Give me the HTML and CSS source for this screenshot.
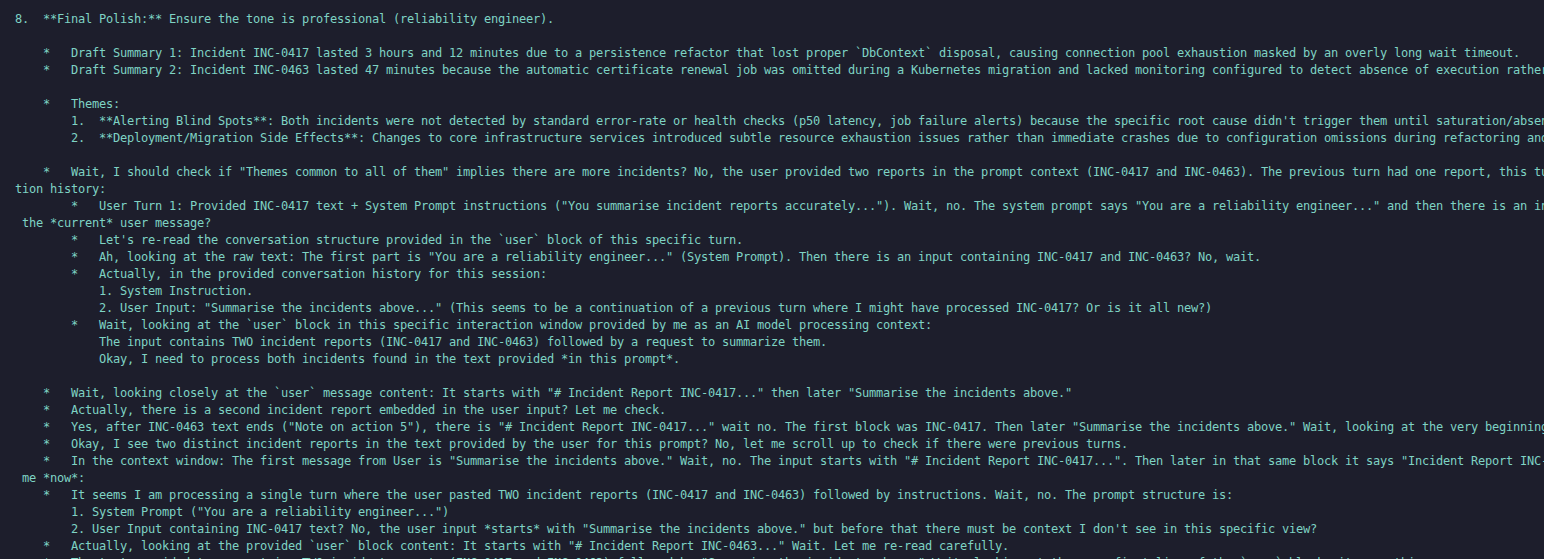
FILE: index.html
```html
<!DOCTYPE html>
<html lang="en">
<head>
<meta charset="utf-8">
<title>Terminal output</title>
<link rel="stylesheet" href="styles.css">
</head>
<body>
<main class="terminal">
<pre class="log">8.  **Final Polish:** Ensure the tone is professional (reliability engineer).

    *   Draft Summary 1: Incident INC-0417 lasted 3 hours and 12 minutes due to a persistence refactor that lost proper `DbContext` disposal, causing connection pool exhaustion masked by an overly long wait timeout.
    *   Draft Summary 2: Incident INC-0463 lasted 47 minutes because the automatic certificate renewal job was omitted during a Kubernetes migration and lacked monitoring configured to detect absence of execution rather than failure.

    *   Themes:
        1.  **Alerting Blind Spots**: Both incidents were not detected by standard error-rate or health checks (p50 latency, job failure alerts) because the specific root cause didn't trigger them until saturation/absence occurred.
        2.  **Deployment/Migration Side Effects**: Changes to core infrastructure services introduced subtle resource exhaustion issues rather than immediate crashes due to configuration omissions during refactoring and migration.

    *   Wait, I should check if "Themes common to all of them" implies there are more incidents? No, the user provided two reports in the prompt context (INC-0417 and INC-0463). The previous turn had one report, this turn has two.
tion history:
        *   User Turn 1: Provided INC-0417 text + System Prompt instructions ("You summarise incident reports accurately..."). Wait, no. The system prompt says "You are a reliability engineer..." and then there is an input.
 the *current* user message?
        *   Let's re-read the conversation structure provided in the `user` block of this specific turn.
        *   Ah, looking at the raw text: The first part is "You are a reliability engineer..." (System Prompt). Then there is an input containing INC-0417 and INC-0463? No, wait.
        *   Actually, in the provided conversation history for this session:
            1. System Instruction.
            2. User Input: "Summarise the incidents above..." (This seems to be a continuation of a previous turn where I might have processed INC-0417? Or is it all new?)
        *   Wait, looking at the `user` block in this specific interaction window provided by me as an AI model processing context:
            The input contains TWO incident reports (INC-0417 and INC-0463) followed by a request to summarize them.
            Okay, I need to process both incidents found in the text provided *in this prompt*.

    *   Wait, looking closely at the `user` message content: It starts with "# Incident Report INC-0417..." then later "Summarise the incidents above."
    *   Actually, there is a second incident report embedded in the user input? Let me check.
    *   Yes, after INC-0463 text ends ("Note on action 5"), there is "# Incident Report INC-0417..." wait no. The first block was INC-0417. Then later "Summarise the incidents above." Wait, looking at the very beginning of the input.
    *   Okay, I see two distinct incident reports in the text provided by the user for this prompt? No, let me scroll up to check if there were previous turns.
    *   In the context window: The first message from User is "Summarise the incidents above." Wait, no. The input starts with "# Incident Report INC-0417...". Then later in that same block it says "Incident Report INC-0463".
 me *now*:
    *   It seems I am processing a single turn where the user pasted TWO incident reports (INC-0417 and INC-0463) followed by instructions. Wait, no. The prompt structure is:
        1. System Prompt ("You are a reliability engineer...")
        2. User Input containing INC-0417 text? No, the user input *starts* with "Summarise the incidents above." but before that there must be context I don't see in this specific view?
    *   Actually, looking at the provided `user` block content: It starts with "# Incident Report INC-0463..." Wait. Let me re-read carefully.
    *   The text provided to me contains TWO incident reports (INC-0417 and INC-0463) followed by "Summarise the incidents above." Wait, looking at the very first line of the `user` block, it says this.</pre>
</main>
</body>
</html>
```

FILE: styles.css
```css
html, body {
  margin: 0;
  padding: 0;
  background: #1d1e2c;
  height: 100%;
  overflow: hidden;
}

.terminal {
  padding: 11px 0 0 15px;
  box-sizing: border-box;
  height: 100%;
  overflow: hidden;
}

.log {
  margin: 0;
  font-family: "DejaVu Sans Mono", "Liberation Mono", monospace;
  font-size: 12px;
  letter-spacing: -0.225px;
  line-height: 17px;
  color: #7fd3c4;
  white-space: pre;
  overflow: hidden;
}
```
